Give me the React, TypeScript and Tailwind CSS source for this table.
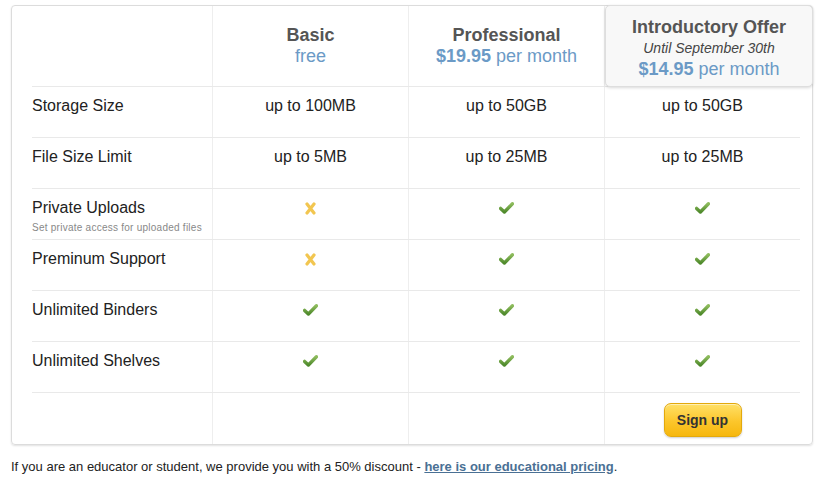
import React from "react"

type Cell = "yes" | "no" | string

const rows: { label: string; note?: string; cells: Cell[] }[] = [
  { label: "Storage Size", cells: ["up to 100MB", "up to 50GB", "up to 50GB"] },
  { label: "File Size Limit", cells: ["up to 5MB", "up to 25MB", "up to 25MB"] },
  { label: "Private Uploads", note: "Set private access for uploaded files", cells: ["no", "yes", "yes"] },
  { label: "Preminum Support", cells: ["no", "yes", "yes"] },
  { label: "Unlimited Binders", cells: ["yes", "yes", "yes"] },
  { label: "Unlimited Shelves", cells: ["yes", "yes", "yes"] },
]

function Check() {
  return (
    <svg width="15" height="12" viewBox="0 0 15 12" className="inline-block">
      <defs>
        <linearGradient id="chk" x1="0" y1="0" x2="0" y2="1">
          <stop offset="0" stopColor="#8dbb5c" />
          <stop offset="1" stopColor="#4f8a2c" />
        </linearGradient>
      </defs>
      <path d="M1.6 6.4 L5.4 10 L13.4 1.8" fill="none" stroke="url(#chk)" strokeWidth="3.4" strokeLinecap="round" strokeLinejoin="round" />
    </svg>
  )
}

function Cross() {
  return (
    <svg width="11" height="13" viewBox="0 0 11 13" className="inline-block">
      <path d="M2 2 L9 11 M9 2 L2 11" fill="none" stroke="#f2c650" strokeWidth="3.2" strokeLinecap="round" />
    </svg>
  )
}

function Value({ v }: { v: Cell }) {
  if (v === "yes") return <Check />
  if (v === "no") return <Cross />
  return <span>{v}</span>
}

const grid = "grid grid-cols-[180px_196px_196px_196px]"

export default function App() {
  return (
    <div className="min-h-[481px] w-[822px] bg-white pt-[5px] pl-[11px] font-['Liberation_Sans',Arial,sans-serif] text-[#222]">
      <div className="relative w-[802px] rounded-[4px] border border-[#dcdcdc] pl-[20px] pr-[12px] shadow-[0_1px_2px_rgba(0,0,0,0.12)]">
        {/* header */}
        <div className={`${grid} h-[81px] border-b border-[#e9e9e9]`}>
          <div />
          <div className="flex flex-col items-center justify-center border-l border-[#eeeeee] text-[18px] leading-[21px]">
            <span className="font-bold text-[#555]">Basic</span>
            <span className="text-[#6b9ac6]">free</span>
          </div>
          <div className="flex flex-col items-center justify-center border-l border-[#eeeeee] text-[18px] leading-[21px]">
            <span className="font-bold text-[#555]">Professional</span>
            <span className="text-[#6b9ac6]">
              <b>$19.95</b> per month
            </span>
          </div>
          <div className="relative border-l border-[#eeeeee]">
            <div className="absolute left-0 top-[-1px] z-10 flex h-[82px] w-[208px] flex-col items-center rounded-[5px] border border-[#dedede] bg-[#f8f8f8] pt-[11px] shadow-[0_1px_3px_rgba(0,0,0,0.15)]">
              <span className="text-[18px] font-bold leading-[21px] text-[#555]">Introductory Offer</span>
              <span className="text-[14px] italic leading-[21px] text-[#444]">Until September 30th</span>
              <span className="text-[18px] leading-[20px] text-[#6b9ac6]">
                <b>$14.95</b> per month
              </span>
            </div>
          </div>
        </div>

        {rows.map((r) => (
          <div key={r.label} className={`${grid} h-[51px] border-b border-[#e9e9e9]`}>
            <div className="pt-[9px]">
              <div className="text-[16px] leading-[20px]">{r.label}</div>
              {r.note && <div className="mt-[4px] text-[10px] leading-[12px] tracking-[0.25px] text-[#888]">{r.note}</div>}
            </div>
            {r.cells.map((c, i) => (
              <div key={i} className="flex h-[50px] justify-center border-l border-[#eeeeee] pt-[9px] text-[16px] leading-[20px]">
                <span className="flex h-[20px] items-center">
                  <Value v={c} />
                </span>
              </div>
            ))}
          </div>
        ))}

        {/* sign up row */}
        <div className={`${grid} h-[51px]`}>
          <div />
          <div className="border-l border-[#eeeeee]" />
          <div className="border-l border-[#eeeeee]" />
          <div className="flex items-center justify-center border-l border-[#eeeeee] pt-[3px]">
            <button className="h-[34px] w-[78px] rounded-[7px] border border-[#e3a90c] bg-[linear-gradient(#ffe067,#fcc62b_55%,#f6b70e)] text-[14px] font-bold text-[#333] shadow-[0_1px_2px_rgba(0,0,0,0.2),inset_0_1px_0_rgba(255,255,255,0.5)]">
              Sign up
            </button>
          </div>
        </div>
      </div>

      <p className="mt-[14px] text-[13px] leading-[16px] text-[#222]">
        If you are an educator or student, we provide you with a 50% discount -{" "}
        <a href="#" className="font-bold text-[#4a7094] underline">
          here is our educational pricing
        </a>
        .
      </p>
    </div>
  )
}
